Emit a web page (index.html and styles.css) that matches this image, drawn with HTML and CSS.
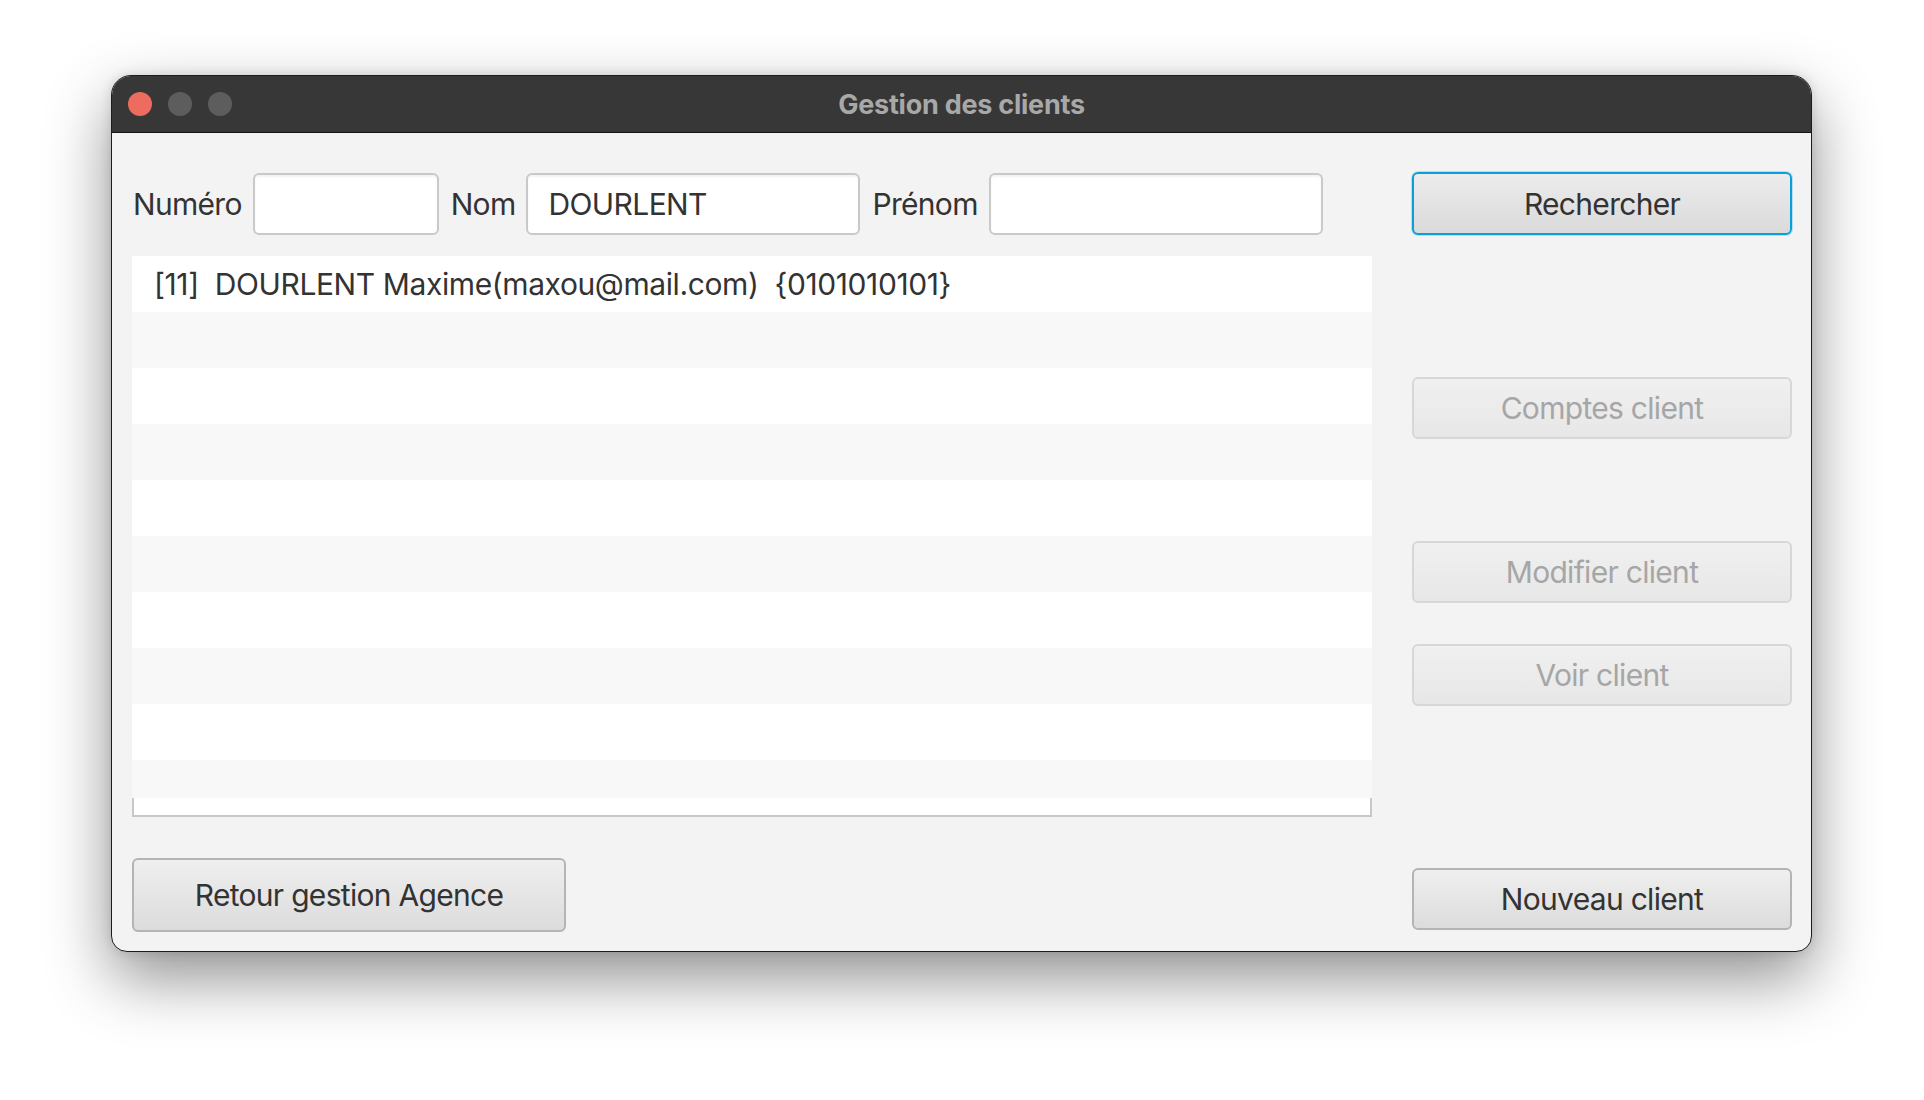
FILE: index.html
```html
<!DOCTYPE html>
<html lang="fr">
<head>
<meta charset="utf-8">
<title>Gestion des clients</title>
<link rel="stylesheet" href="styles.css">
</head>
<body>
<div class="window">
  <div class="titlebar">
    <div class="lights">
      <span class="light red"></span>
      <span class="light gray"></span>
      <span class="light gray"></span>
    </div>
    <div class="title">Gestion des clients</div>
  </div>
  <div class="content">
    <div class="left">
      <div class="search">
        <label class="lbl">Numéro</label>
        <div class="input w-num"></div>
        <label class="lbl">Nom</label>
        <div class="input w-nom">DOURLENT</div>
        <label class="lbl">Prénom</label>
        <div class="input w-pre"></div>
      </div>
      <div class="list">
        <div class="rows">
          <div class="row">[11]&nbsp; DOURLENT Maxime(maxou@mail.com) &nbsp;{0101010101}</div>
          <div class="row"></div>
          <div class="row"></div>
          <div class="row"></div>
          <div class="row"></div>
          <div class="row"></div>
          <div class="row"></div>
          <div class="row"></div>
          <div class="row"></div>
          <div class="row"></div>
        </div>
        <div class="list-foot"></div>
      </div>
      <div class="bottom-left">
        <button class="btn btn-retour">Retour gestion Agence</button>
      </div>
    </div>
    <div class="right">
      <button class="btn focus b-rech">Rechercher</button>
      <button class="btn disabled b-comptes">Comptes client</button>
      <button class="btn disabled b-modif">Modifier client</button>
      <button class="btn disabled b-voir">Voir client</button>
      <button class="btn b-nouveau">Nouveau client</button>
    </div>
  </div>
</div>
</body>
</html>
```
FILE: styles.css
```css
html, body {
  margin: 0;
  padding: 0;
  background: #ffffff;
  width: 1924px;
  height: 1100px;
  overflow: hidden;
}
body {
  font-family: "Inter", "Noto Sans", "Liberation Sans", sans-serif;
  color: #333333;
}
.window {
  margin-left: 111px;
  margin-top: 75px;
  width: 1701px;
  height: 877px;
  box-sizing: border-box;
  border: 1px solid #1c1c1c;
  border-radius: 20px 20px 16px 16px;
  overflow: hidden;
  background: #f3f3f3;
  box-shadow: 0 26px 64px rgba(0,0,0,0.44), 0 0 12px rgba(0,0,0,0.12);
  display: flex;
  flex-direction: column;
}
.titlebar {
  height: 56px;
  flex: none;
  background: #373737;
  border-bottom: 1px solid #141414;
  display: flex;
  align-items: center;
  position: relative;
}
.lights {
  display: flex;
  gap: 16px;
  padding-left: 16px;
}
.light {
  width: 24px;
  height: 24px;
  border-radius: 50%;
  display: block;
}
.light.red { background: #ee6b5f; }
.light.gray { background: #5d5d5d; }
.title {
  position: absolute;
  left: 0;
  right: 0;
  text-align: center;
  font-weight: 700;
  font-size: 27px;
  color: #a8a8a8;
  letter-spacing: -0.25px;
}
.content {
  flex: 1;
  display: grid;
  grid-template-columns: 1240px 380px;
  column-gap: 40px;
  padding: 39px 19px 19px 20px;
}
.left {
  display: flex;
  flex-direction: column;
}
.search {
  display: flex;
  align-items: center;
  height: 64px;
  gap: 11px;
}
.lbl {
  font-size: 30px;
  letter-spacing: -0.7px;
  color: #333;
  padding-left: 1px;
}
.input {
  height: 62px;
  box-sizing: border-box;
  background: #ffffff;
  border: 2px solid #c9c9c9;
  border-radius: 6px;
  box-shadow: inset 0 2px 2px rgba(0,0,0,0.05);
  font-size: 30px;
  letter-spacing: -0.6px;
  display: flex;
  align-items: center;
  padding-left: 20px;
  color: #333;
}
.w-num { width: 186px; }
.w-nom { width: 334px; }
.w-pre { width: 334px; }
.list {
  margin-top: 20px;
  display: flex;
  flex-direction: column;
}
.rows {
  display: flex;
  flex-direction: column;
  height: 542px;
  overflow: hidden;
}
.row {
  height: 56px;
  flex: none;
  background: #ffffff;
  font-size: 30px;
  color: #333;
  display: flex;
  align-items: center;
  padding-left: 22px;
  letter-spacing: -0.4px;
}
.row:nth-child(even) { background: #f8f8f8; }
.list-foot {
  height: 19px;
  background: #ffffff;
  border: 2px solid #c8c8c8;
  border-top: none;
  box-sizing: border-box;
}
.bottom-left {
  margin-top: 41px;
}
.btn {
  display: flex;
  align-items: center;
  justify-content: center;
  box-sizing: border-box;
  height: 62px;
  width: 380px;
  font-family: "Inter", "Noto Sans", "Liberation Sans", sans-serif;
  font-size: 30px;
  letter-spacing: -0.7px;
  color: #333333;
  background: linear-gradient(#efefef, #dcdcdc);
  border: 2px solid #b4b4b4;
  border-radius: 6px;
  padding: 0;
  margin: 0;
}
.btn-retour {
  width: 434px;
  height: 74px;
}
.btn.disabled {
  color: #a6a6a6;
  background: linear-gradient(#f0f0f0, #e7e7e7);
  border-color: #d7d7d7;
}
.btn.focus {
  height: 63px;
  border: 2px solid #0a9fd6;
  box-shadow: 0 0 0 1px rgba(10,159,214,0.25);
  background: linear-gradient(#ececec, #dadada);
}
.right {
  display: flex;
  flex-direction: column;
}
.b-rech { margin-top: 0; }
.b-comptes { margin-top: 142px; }
.b-modif { margin-top: 102px; }
.b-voir { margin-top: 41px; }
.b-nouveau { margin-top: 162px; }
```
